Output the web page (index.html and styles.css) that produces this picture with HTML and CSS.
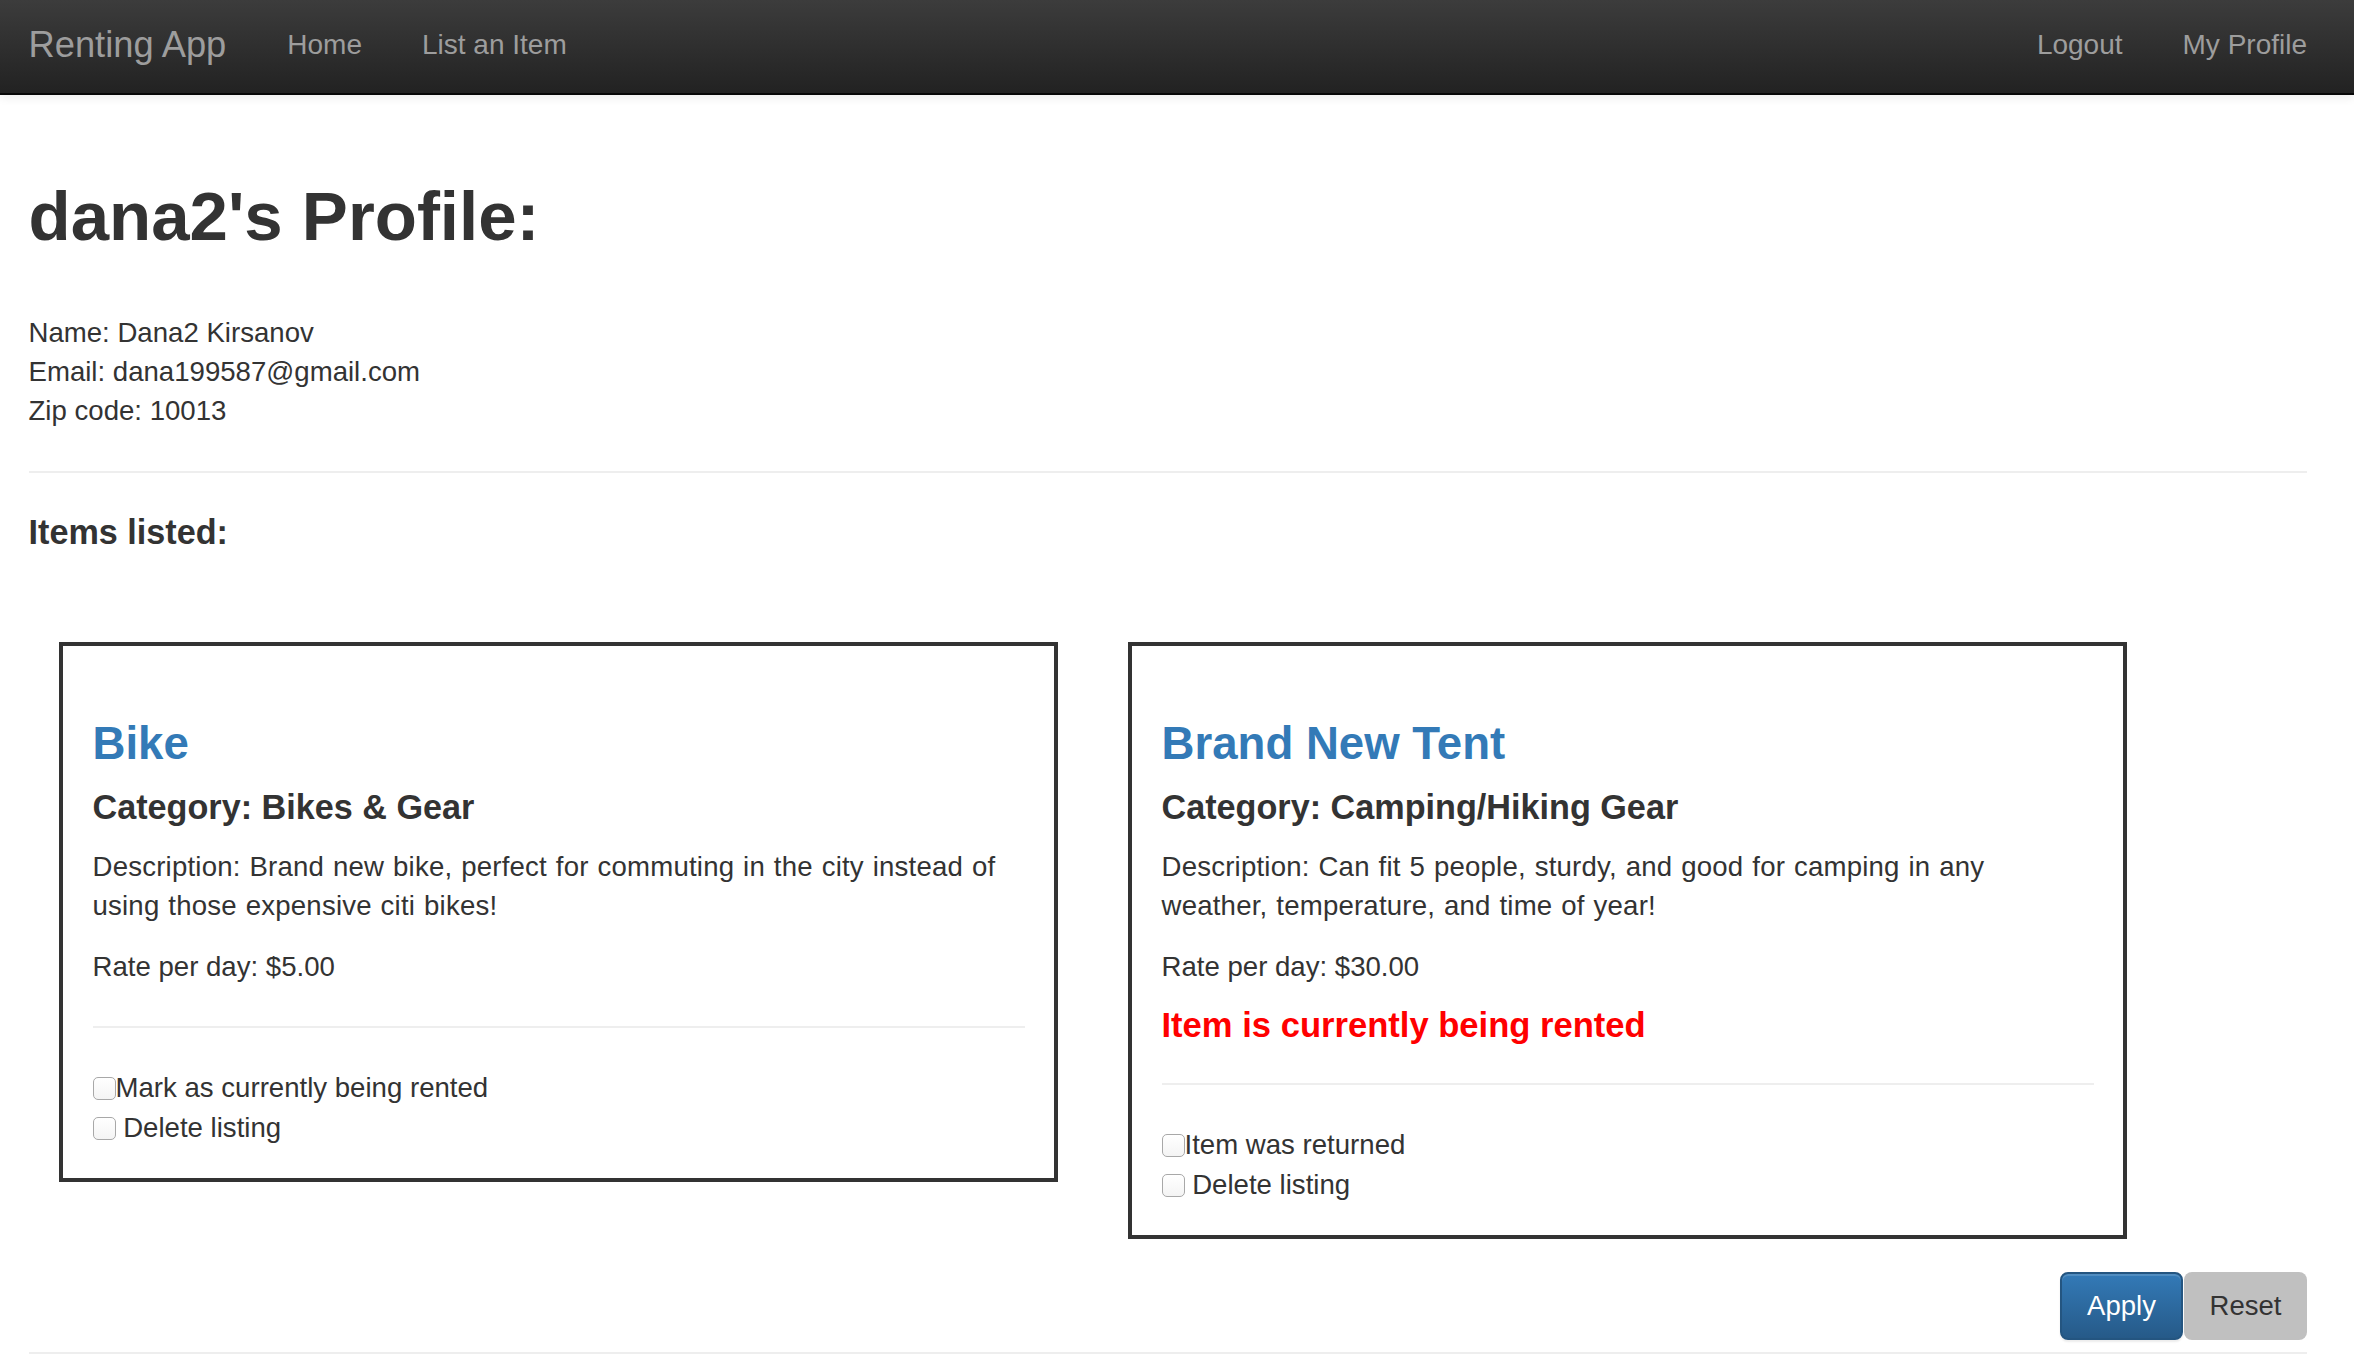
FILE: index.html
```html
<!DOCTYPE html>
<html lang="en">
<head>
<meta charset="utf-8">
<title>Renting App - Profile</title>
<link rel="stylesheet" href="styles.css">
</head>
<body>
<nav class="navbar">
  <a class="brand" href="#">Renting App</a>
  <ul class="nav">
    <li><a href="#">Home</a></li>
    <li><a href="#">List an Item</a></li>
  </ul>
  <ul class="nav nav-right">
    <li><a href="#">Logout</a></li>
    <li><a href="#">My Profile</a></li>
  </ul>
</nav>

<main class="page">
  <h1 class="title">dana2's Profile:</h1>
  <div class="info">
    <div>Name: Dana2 Kirsanov</div>
    <div>Email: dana199587@gmail.com</div>
    <div>Zip code: 10013</div>
  </div>
  <hr class="rule">
  <h4 class="section">Items listed:</h4>

  <form class="listing-form">
    <div class="cards">
      <div class="card">
        <h3 class="item-name"><a href="#">Bike</a></h3>
        <h4 class="category">Category: Bikes &amp; Gear</h4>
        <p class="desc">Description: Brand new bike, perfect for commuting in the city instead of<br>using those expensive citi bikes!</p>
        <p class="rate">Rate per day: $5.00</p>
        <hr class="card-rule">
        <div class="checks">
          <label><input type="checkbox" class="cb">Mark as currently being rented</label>
          <label><input type="checkbox" class="cb"> Delete listing</label>
        </div>
      </div>
      <div class="card">
        <h3 class="item-name"><a href="#">Brand New Tent</a></h3>
        <h4 class="category">Category: Camping/Hiking Gear</h4>
        <p class="desc">Description: Can fit 5 people, sturdy, and good for camping in any<br>weather, temperature, and time of year!</p>
        <p class="rate">Rate per day: $30.00</p>
        <h4 class="rented">Item is currently being rented</h4>
        <hr class="card-rule card-rule-rented">
        <div class="checks">
          <label><input type="checkbox" class="cb">Item was returned</label>
          <label><input type="checkbox" class="cb"> Delete listing</label>
        </div>
      </div>
    </div>
    <div class="actions">
      <button type="submit" class="btn btn-apply">Apply</button>
      <button type="reset" class="btn btn-reset">Reset</button>
    </div>
  </form>
  <hr class="rule rule-bottom">
</main>
</body>
</html>
```

FILE: styles.css
```css
* { box-sizing: border-box; }

html, body {
  margin: 0;
  padding: 0;
  background: #fff;
}

body {
  font-family: "Liberation Sans", Arial, Helvetica, sans-serif;
  font-size: 27.6px;
  line-height: 39px;
  color: #333;
}

a { text-decoration: none; }

/* ---------- navbar ---------- */
.navbar {
  display: flex;
  align-items: center;
  height: 95px;
  padding: 0 17px 4px 28.5px;
  background: linear-gradient(to bottom, #3c3c3c 0%, #222 100%);
  border-bottom: 2px solid #080808;
  box-shadow: 0 3px 9px rgba(0, 0, 0, 0.07);
  position: relative;
}

.brand {
  font-size: 36.3px;
  line-height: 40px;
  color: #9d9d9d;
  margin-right: 31px;
}

.nav {
  display: flex;
  list-style: none;
  margin: 0;
  padding: 0;
}

.nav a {
  display: block;
  padding: 0 30px;
  font-size: 28px;
  line-height: 40px;
  color: #9d9d9d;
}

.nav-right { margin-left: auto; }

/* ---------- page ---------- */
.page {
  padding: 0 47px 0 28.5px;
}

.title {
  margin: 84px 0 0;
  font-size: 69px;
  line-height: 76px;
  font-weight: 700;
  color: #333;
}

.info {
  margin-top: 58px;
}

.rule {
  margin: 41px 0 0;
  border: 0;
  border-top: 2px solid #eee;
}

.section {
  margin: 41px 0 0;
  font-size: 34.2px;
  line-height: 37.6px;
  font-weight: 700;
  color: #333;
}

/* ---------- cards ---------- */
.listing-form { margin: 0; }

.cards {
  display: flex;
  align-items: flex-start;
  gap: 70px;
  margin-top: 90px;
  padding-left: 30px;
}

.card {
  width: 999px;
  border: 4px solid #333;
  padding: 73px 29px 30.6px 30px;
}

.item-name {
  margin: 0;
  font-size: 45.6px;
  line-height: 50.2px;
  font-weight: 700;
}

.item-name a { color: #337ab7; }

.category {
  margin: 20px 0 0;
  font-size: 34.2px;
  line-height: 37.6px;
  font-weight: 700;
  color: #333;
}

.desc {
  margin: 21px 0 0;
  word-spacing: 1px;
  letter-spacing: 0.2px;
}

.rate {
  margin: 22px 0 0;
}

.rented {
  margin: 20px 0 0;
  font-size: 34.6px;
  line-height: 38px;
  font-weight: 700;
  color: #f00;
}

.card-rule {
  margin: 40px 0 0;
  border: 0;
  border-top: 2px solid #eee;
}

.card-rule-rented { margin-top: 39px; }

.checks {
  margin-top: 39.4px;
  line-height: 40px;
}

.checks label {
  display: block;
}

.cb {
  -webkit-appearance: none;
  appearance: none;
  width: 23px;
  height: 23px;
  margin: 0;
  border: 1.5px solid #a8a8a8;
  border-radius: 5px;
  background: linear-gradient(to bottom, #fff, #f4f4f4);
  vertical-align: -3px;
}

/* ---------- actions ---------- */
.actions {
  display: flex;
  justify-content: flex-end;
  margin-top: 33px;
}

.btn {
  height: 68px;
  width: 123px;
  font-family: "Liberation Sans", Arial, Helvetica, sans-serif;
  font-size: 27.5px;
  border-radius: 8px;
  cursor: pointer;
}

.btn-apply {
  color: #fff;
  background: linear-gradient(to bottom, #337ab7 0%, #265a88 100%);
  border: 2px solid #245580;
  box-shadow: inset 0 2px 0 rgba(255, 255, 255, 0.15), 0 2px 2px rgba(0, 0, 0, 0.08);
}

.btn-reset {
  margin-left: 1px;
  color: #333;
  background: #c0c0c0;
  border: 0;
}

.rule-bottom {
  margin-top: 12px;
}
```
